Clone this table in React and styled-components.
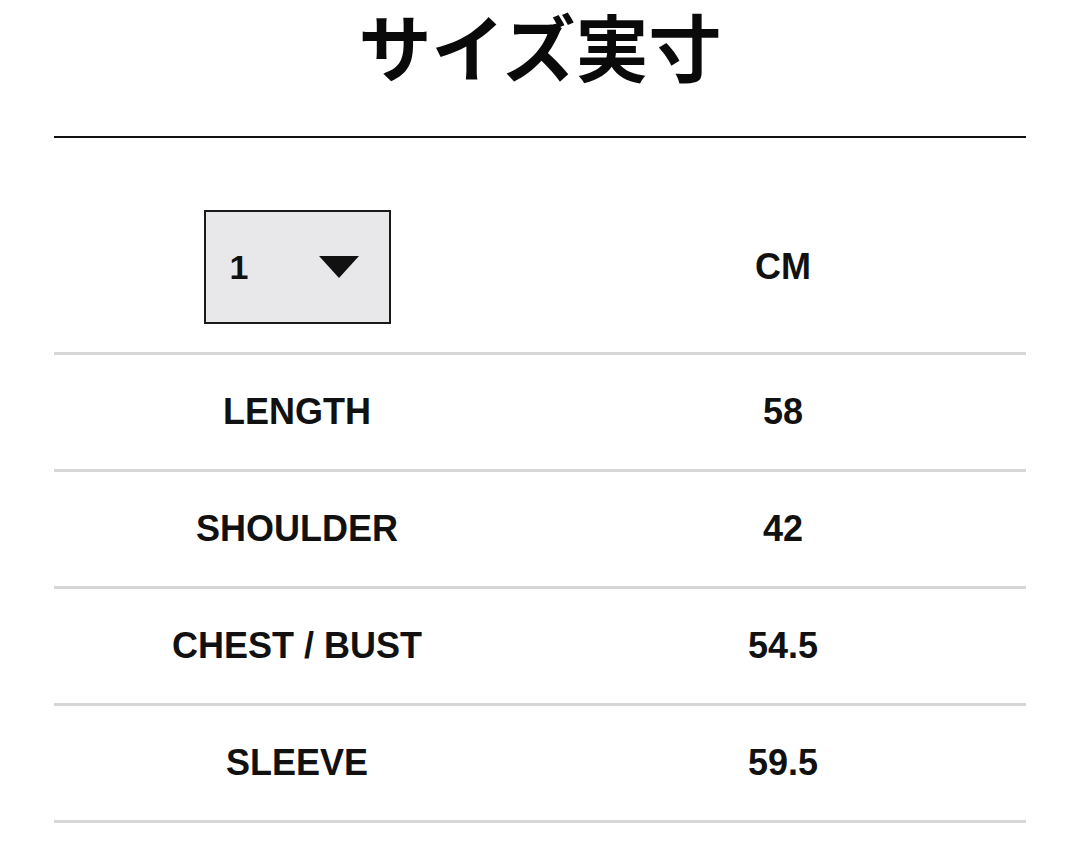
import styled, { createGlobalStyle } from "styled-components";

const GlobalStyle = createGlobalStyle`
  body {
    margin: 0;
    background: #ffffff;
    font-family: "Liberation Sans", Arial, "Noto Sans CJK JP", sans-serif;
    color: #111111;
  }
`;

const rows = [
  { label: "LENGTH", value: "58" },
  { label: "SHOULDER", value: "42" },
  { label: "CHEST / BUST", value: "54.5" },
  { label: "SLEEVE", value: "59.5" },
];

function App() {
  return (
    <Page>
      <GlobalStyle />
      <Title>サイズ実寸</Title>
      <Table>
        <HeaderRow>
          <Cell>
            <Select>
              <span>1</span>
              <Arrow viewBox="0 0 40 22">
                <polygon points="0,0 40,0 20,22" fill="#111" />
              </Arrow>
            </Select>
          </Cell>
          <Cell>CM</Cell>
        </HeaderRow>
        {rows.map((r) => (
          <Row key={r.label}>
            <Cell>{r.label}</Cell>
            <Cell>{r.value}</Cell>
          </Row>
        ))}
      </Table>
    </Page>
  );
}

export default App;

const Page = styled.div`
  padding: 1px 54px 0;
`;

const Title = styled.h1`
  margin: 0;
  font-family: "Noto Sans CJK JP", sans-serif;
  font-weight: 700;
  font-size: 73px;
  line-height: 86px;
  text-align: center;
  color: #0a0a0a;
  padding-bottom: 49px;
  border-bottom: 2px solid #111;
`;

const Table = styled.div`
  display: flex;
  flex-direction: column;
`;

const Row = styled.div`
  display: grid;
  grid-template-columns: 1fr 1fr;
  align-items: center;
  height: 114px;
  border-top: 3px solid #d6d6d6;
  &:last-child {
    border-bottom: 3px solid #d6d6d6;
  }
`;

const HeaderRow = styled.div`
  display: grid;
  grid-template-columns: 1fr 1fr;
  align-items: center;
  padding: 72px 0 28px;
`;

const Cell = styled.div`
  display: flex;
  justify-content: center;
  align-items: center;
  font-weight: 700;
  font-size: 36px;
  color: #111;
`;

const Select = styled.div`
  box-sizing: border-box;
  width: 187px;
  height: 114px;
  border: 2px solid #1a1a1a;
  background: #e8e8ea;
  display: flex;
  align-items: center;
  padding: 0 30px 0 24px;
  justify-content: space-between;
  font-size: 34px;
  font-weight: 700;
`;

const Arrow = styled.svg`
  width: 40px;
  height: 22px;
`;
